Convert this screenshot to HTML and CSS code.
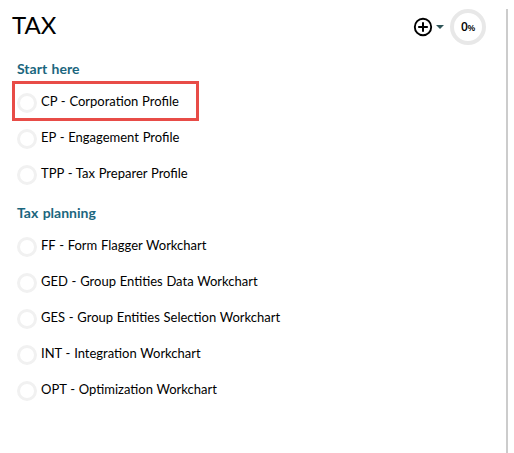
FILE: index.html
```html
<!DOCTYPE html>
<html lang="en">
<head>
<meta charset="utf-8">
<title>Tax</title>
<link rel="stylesheet" href="styles.css">
</head>
<body>
<main class="panel">
  <header class="header">
    <h1 class="title">TAX</h1>
    <button class="add" aria-label="Add">
      <svg width="31" height="20" viewBox="0 0 31 20">
        <circle cx="10" cy="10" r="8.2" fill="none" stroke="#000" stroke-width="1.9"/>
        <path d="M10 5.2v9.6M5.2 10h9.6" stroke="#000" stroke-width="2"/>
        <path d="M23 8h8l-4 4z" fill="#2f5558"/>
      </svg>
    </button>
    <div class="progress"><span>0<small>%</small></span></div>
  </header>
  <section class="group">
    <h2 class="heading">Start here</h2>
    <ul class="list">
      <li class="item selected"><i class="ring"></i><span>CP - Corporation Profile</span></li>
      <li class="item"><i class="ring"></i><span>EP - Engagement Profile</span></li>
      <li class="item"><i class="ring"></i><span>TPP - Tax Preparer Profile</span></li>
    </ul>
  </section>
  <section class="group">
    <h2 class="heading">Tax planning</h2>
    <ul class="list">
      <li class="item"><i class="ring"></i><span>FF - Form Flagger Workchart</span></li>
      <li class="item"><i class="ring"></i><span>GED - Group Entities Data Workchart</span></li>
      <li class="item"><i class="ring"></i><span>GES - Group Entities Selection Workchart</span></li>
      <li class="item"><i class="ring"></i><span>INT - Integration Workchart</span></li>
      <li class="item"><i class="ring"></i><span>OPT - Optimization Workchart</span></li>
    </ul>
  </section>
</main>
</body>
</html>
```
FILE: styles.css
```css
* { box-sizing: border-box; }
body { margin: 0; background: #fff; color: #000; font-family: Lato, sans-serif; }
.panel { width: 508px; height: 444px; margin-top: 9px; border-right: 2px solid #ccc; }
.header { display: flex; align-items: center; height: 42px; padding: 0 20px 6px 12px; }
.title { flex: 1; margin: 0 0 5px; font-size: 24px; font-weight: 400; line-height: 32px; }
.add { display: flex; margin: 0 6px 0 0; padding: 0; border: 0; background: none; }
.progress { display: flex; align-items: center; justify-content: center; width: 36px; height: 36px; padding-top: 1px; border: 4px solid #e8e8e8; border-radius: 50%; font: 600 12px/16px "Open Sans", sans-serif; letter-spacing: -0.2px; }
.progress small { font-size: 9px; }
.group { padding-bottom: 4px; }
.heading { height: 32px; margin: 0; padding-left: 17px; color: #1b667e; font-size: 14px; font-weight: 700; line-height: 36px; word-spacing: 1px; }
.list { margin: 0; padding: 0; list-style: none; }
.item { display: flex; align-items: center; height: 36px; padding-left: 17px; font-size: 13px; line-height: 36px; word-spacing: 0.4px; }
.ring { width: 20px; height: 20px; margin: 4px 4px 0 0; border: 3px solid #f1f1f1; border-radius: 50%; }
.selected { width: 187px; height: 40px; margin: -2px 0 -2px 12px; padding-left: 2px; border: 3px solid #e84c47; }
```
